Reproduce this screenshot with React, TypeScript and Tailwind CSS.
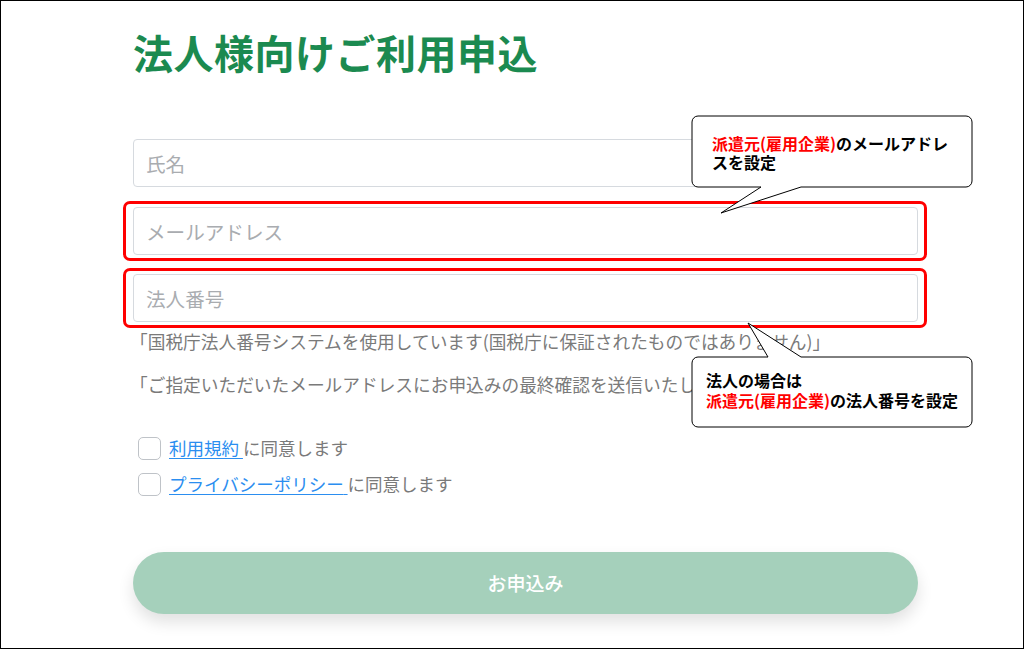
import { useState } from "react";

const jp = { fontFamily: '"Noto Sans CJK JP", "Noto Sans", sans-serif' };

function Field({ placeholder, marked }: { placeholder: string; marked?: boolean }) {
  return (
    <div className="relative">
      <input
        placeholder={placeholder}
        className="block h-[48px] w-full rounded-[4px] border border-[#d6dadf] bg-white px-[12px] text-[19.6px] text-[#333] outline-none placeholder:text-[#a9acb0]"
      />
      {marked && (
        <div className="pointer-events-none absolute -bottom-[6px] -left-[10px] -right-[9px] -top-[6px] rounded-[7px] border-[3px] border-[#ff0000]" />
      )}
    </div>
  );
}

function Agree({ link }: { link: string }) {
  const [checked, setChecked] = useState(false);
  return (
    <label className="flex h-[24px] items-center text-[17.5px] text-[#7a7a7a]">
      <span
        onClick={() => setChecked(!checked)}
        className="mr-[8px] ml-[5px] block h-[23px] w-[23px] rounded-[5px] border-[1.5px] border-[#bfc3c8] bg-white"
      />
      <a href="#" className="text-[#2b8ef0] underline underline-offset-[3px]">
        {link}&nbsp;
      </a>
      <span>に同意します</span>
    </label>
  );
}

export default function App() {
  return (
    <div style={jp} className="relative h-[649px] w-[1024px] overflow-hidden border border-black bg-white">
      <div className="ml-[132px] w-[785px]">
        <h1 className="pt-[27px] text-[40px] font-bold leading-[48px] tracking-[0.5px] text-[#1b8a50]">
          法人様向けご利用申込
        </h1>

        <div className="mt-[63px]">
          <Field placeholder="氏名" />
          <div className="mt-[20px]">
            <Field placeholder="メールアドレス" marked />
          </div>
          <div className="mt-[19px]">
            <Field placeholder="法人番号" marked />
          </div>
        </div>

        <p className="-ml-[3px] mt-[6px] text-[17.7px] leading-[27px] text-[#7a7a7a]">
          「国税庁法人番号システムを使用しています(国税庁に保証されたものではありません)」
        </p>
        <p className="-ml-[3px] mt-[16px] text-[17.7px] leading-[27px] text-[#7a7a7a]">
          「ご指定いただいたメールアドレスにお申込みの最終確認を送信いたします」
        </p>

        <div className="mt-[38px] flex flex-col gap-[12px]">
          <Agree link="利用規約" />
          <Agree link="プライバシーポリシー" />
        </div>

        <button className="mt-[56px] flex h-[62px] w-full items-center justify-center rounded-full bg-[#a5d0bb] text-[19px] font-medium text-white shadow-[0_8px_16px_rgba(0,0,0,0.12)]">
          お申込み
        </button>
      </div>

      {/* callout: mail address */}
      <div className="absolute left-[690px] top-[114px] h-[100px] w-[283px]">
        <svg width="283" height="100" className="absolute left-0 top-0">
          <path
            d="M7,1 H275 A6,6 0 0 1 281,7 V66 A6,6 0 0 1 275,72 H110 L30,98 L70,72 H7 A6,6 0 0 1 1,66 V7 A6,6 0 0 1 7,1 Z"
            fill="#fff"
            stroke="#000"
            strokeWidth="1"
          />
        </svg>
        <div className="absolute left-[21px] top-[19px] text-[16px] font-bold leading-[19px] text-black">
          <span className="text-[#ff0000]">派遣元(雇用企業)</span>のメールアドレ
          <br />
          スを設定
        </div>
      </div>

      {/* callout: corporate number */}
      <div className="absolute left-[690px] top-[320px] h-[108px] w-[283px]">
        <svg width="283" height="108" className="absolute left-0 top-0">
          <path
            d="M7,36 H77 L57,2 L110,36 H275 A6,6 0 0 1 281,42 V100 A6,6 0 0 1 275,106 H7 A6,6 0 0 1 1,100 V42 A6,6 0 0 1 7,36 Z"
            fill="#fff"
            stroke="#000"
            strokeWidth="1"
          />
        </svg>
        <div className="absolute left-[15px] top-[49px] text-[16px] font-bold leading-[20px] text-black">
          法人の場合は
          <br />
          <span className="text-[#ff0000]">派遣元(雇用企業)</span>の法人番号を設定
        </div>
      </div>
    </div>
  );
}
